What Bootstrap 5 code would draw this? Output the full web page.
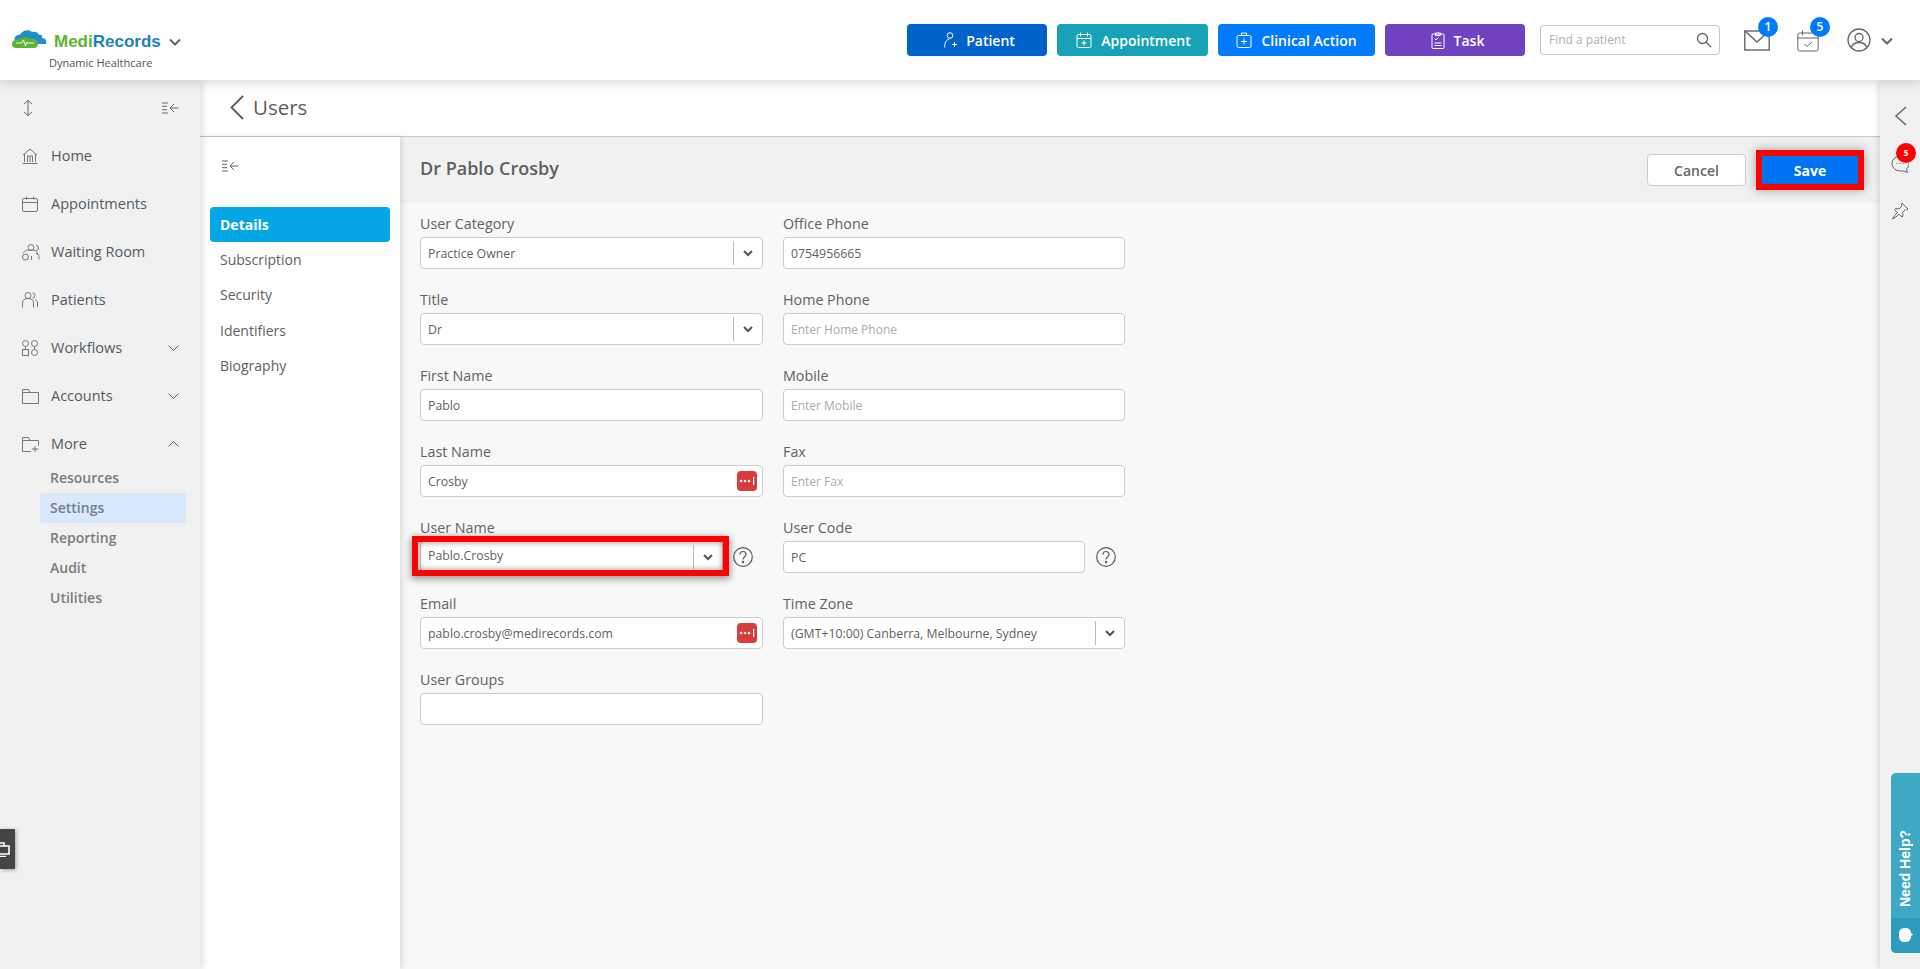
<!DOCTYPE html>
<html lang="en">
<head>
    <meta charset="UTF-8">
    <meta name="viewport" content="width=device-width, initial-scale=1.0">
    <title>Users</title>
    <link href="https://cdn.jsdelivr.net/npm/bootstrap@5.3.3/dist/css/bootstrap.min.css" rel="stylesheet"/>
    <style>
        html, body { height: 100%; }
        body { font-family: "Open Sans", sans-serif; color: #5c5c5c; overflow: hidden; background: #f8f8f8; }
        svg { display: block; flex: none; fill: none; stroke: currentColor; stroke-width: 1; }

        /* top bar */
        .top-bar { height: 80px; background: #fff; box-shadow: 0 2px 10px rgba(0,0,0,.16); position: relative; z-index: 5; padding: 0 0 0 11px; }
        .logo { width: 175px; padding-top: 20px; }
        .logo-mark { margin-top: -6px; }
        .logo-name { font: bold 17px "Liberation Sans", sans-serif; line-height: 22px; margin-left: 7px; }
        .logo-name b:first-child { color: #5cb531; }
        .logo-name b:last-child { color: #2280c0; }
        .logo-sub { font-size: 11px; line-height: 14px; color: #555; margin: 3px 0 0 38px; }
        .act { height: 32px; border: 0; border-radius: 4px; color: #fff; font-size: 14px; font-weight: 600; display: flex; align-items: center; justify-content: center; gap: 9px; padding: 0; }
        .act + .act { margin-left: 10px; }
        .act-patient { width: 140px; background: #0063cc; padding-left: 5px; }
        .act-appt { width: 151px; background: #17a2b8; padding-left: 2px; }
        .act-clinical { width: 157px; background: #007bff; }
        .act-task { width: 140px; background: #6f42c1; padding-left: 5px; }
        .find { width: 180px; height: 30px; margin-left: 15px; border: 1px solid #c6c6c6; border-radius: 4px; padding: 0 7px 0 8px; color: #b0b0b0; font-size: 12px; }
        .top-icon { width: 40px; height: 40px; color: #666; position: relative; }
        .num { position: absolute; width: 20px; height: 20px; border-radius: 50%; background: #007bff; color: #fff; font-size: 12px; font-weight: 600; line-height: 20px; text-align: center; }

        /* left menu */
        .side { width: 200px; background: #f1f1f1; box-shadow: 2px 0 8px rgba(0,0,0,.14); position: relative; z-index: 4; }
        .side-top { height: 52px; padding: 4px 21px 0 23px; color: #666; }
        .side-item { height: 48px; padding: 0 21px 0 22px; font-size: 14.5px; font-weight: 500; color: #535a63; gap: 9px; }
        .side-item .ico { width: 20px; color: #777; }
        .side-subs { margin-top: -5px; }
        .side-sub { height: 30px; margin-left: 40px; width: 146px; padding-left: 10px; border-radius: 4px; font-size: 14px; font-weight: 600; color: #7b7b7b; line-height: 30px; }
        .side-sub.active { background: #d8e9fc; color: #6f7f8e; }

        /* page */
        .page-head { height: 57px; background: #fff; border-bottom: 1px solid #c8c8c8; padding: 0 0 2px 30px; gap: 9px; font-size: 20.5px; font-weight: 500; color: #5c5c5c; }
        .sec-nav { width: 200px; background: #fff; box-shadow: 2px 0 6px rgba(0,0,0,.12); position: relative; z-index: 2; padding: 0 10px; }
        .sec-toggle { height: 70px; padding: 0 0 12px 12px; color: #666; }
        .sec-link { height: 35.2px; padding-left: 10px; font-size: 14px; font-weight: 500; color: #606060; line-height: 35px; border-radius: 4px; }
        .sec-link.active { background: #05a6e6; color: #fff; font-weight: 700; }
        .title-bar { height: 66px; background: #f1f1f1; padding: 0 16px 0 20px; }
        .title-bar h1 { font-size: 18px; font-weight: 600; color: #5f5f5f; margin: 0 0 2px; }
        .btn-cancel { width: 99px; height: 32px; background: #fff; border: 1px solid #ccc; border-radius: 4px; color: #666; font-size: 14px; font-weight: 600; padding: 0; }
        .btn-save { width: 96px; height: 28px; margin: 0 6px 0 16px; background: #0073f5; border: 0; border-radius: 0; color: #fff; font-size: 14px; font-weight: 700; padding: 0; outline: 6px solid #f00; box-shadow: 0 0 10px 6px rgba(0,0,0,.35); }

        /* form */
        .form-area { display: grid; grid-template-columns: 343px 342px; column-gap: 20px; row-gap: 0; padding: 10px 0 0 20px; align-content: start; }
        .field { height: 76px; position: relative; }
        .field label { display: block; height: 24px; font-size: 14.3px; font-weight: 500; line-height: 22px; color: #626262; margin: 0; }
        .field .form-control { height: 32px; border: 1px solid #ccc; border-radius: 4px; font-size: 12.3px; font-weight: 500; color: #5f5f5f; padding: 0 7px; box-shadow: none; }
        .field .form-control::placeholder { color: #aaa; font-size: 12px; }
        .pick { height: 32px; background: #fff; border: 1px solid #ccc; border-radius: 4px; }
        .pick .form-control { border: 0; background: transparent; height: 30px; }
        .pick .arrow { width: 29px; height: 24px; border-left: 1px solid #bbb; color: #555; flex: none; }
        .fill-icon { position: absolute; right: 6px; top: 30px; width: 20px; height: 20px; background: #d93c3c; border-radius: 4px; color: #fff; }
        .help { color: #5a5a5a; width: 20px; height: 20px; stroke-width: 1.2; }
        .mark-box { position: absolute; left: -8px; top: 19px; width: 317px; height: 40px; border: 6px solid #f00; box-shadow: 0 2px 7px 1px rgba(0,0,0,.4), inset 0 0 6px rgba(0,0,0,.45); pointer-events: none; }
        .field .marked-input { padding-bottom: 3px; }

        /* right rail */
        .rail { width: 40px; background: #f1f1f1; box-shadow: -2px 0 6px rgba(0,0,0,.12); position: relative; z-index: 3; color: #666; padding-top: 26px; gap: 27px; }
        .rail .red-num { position: absolute; left: 5px; top: -12px; width: 20px; height: 20px; border-radius: 50%; background: #f00; color: #fff; font-size: 8px; font-weight: 700; line-height: 20px; text-align: center; }
        .need-help { position: absolute; right: 0; top: 693px; width: 29px; height: 180px; border-radius: 5px 0 0 5px; overflow: hidden; background: #3fa9c5; color: #fff; }
        .need-help span { display: block; height: 145px; writing-mode: vertical-rl; transform: rotate(180deg); font: bold 14px/29px "Liberation Sans", sans-serif; white-space: nowrap; padding-top: 11px; }
        .need-help i { display: flex; height: 35px; background: #2d9cbc; align-items: center; justify-content: center; }
        .print-tab { position: absolute; left: 0; top: 829px; width: 15px; height: 40px; background: #454545; box-shadow: 1px 1px 4px rgba(0,0,0,.35); color: #fff; z-index: 6; overflow: hidden; }
        .print-tab svg { margin: 13px 0 0 -8px; stroke-width: 1.6; }
    </style>
</head>
<body class="d-flex flex-column">

    <header class="top-bar d-flex align-items-center">
        <div class="logo">
            <div class="d-flex align-items-center">
                <svg class="logo-mark" width="36" height="20" viewBox="0 0 36 20" style="stroke:none">
                    <path fill="#1f8fc9" d="M5 14C1 9 6 5 9 6c2-5 9-6 12-3 3-1 6 0 7 3 2-1 4 1 3 3 4 0 5 3 4 6H6z"/>
                    <path fill="#5cb531" d="M1 15c0-3 3-5 6-4 2-3 9-4 12-1 4-1 8 1 8 4 0 4-2 5-4 5H6c-3 0-5-1-5-4z"/>
                    <path stroke="#fff" stroke-width=".9" fill="none" d="M5 14h6l1.500-3 2 6 1.500-4 1 1h6"/>
                </svg>
                <div class="logo-name"><b>Medi</b><b>Records</b></div>
                <svg class="ms-2" width="12" height="8" viewBox="0 0 12 8" style="color:#666;stroke-width:2"><path d="M1 1.500l5 5 5-5"/></svg>
            </div>
            <div class="logo-sub">Dynamic Healthcare</div>
        </div>

        <div class="d-flex align-items-center ms-auto">
            <button class="act act-patient">
                <svg width="13" height="16" viewBox="0 0 13 16"><circle cx="6" cy="3.500" r="2.800"/><path d="M.7 15.500c0-5 1.600-7.500 4.300-8.300M8 12.500h5M10.500 10v5"/></svg>Patient
            </button>
            <button class="act act-appt">
                <svg width="16" height="16" viewBox="0 0 16 16"><rect x="1" y="2.500" width="14" height="13" rx="1.500"/><path d="M1 6.500h14M4.500.5v4M11.500.5v4M8 8.500v5M5.500 11h5"/></svg>Appointment
            </button>
            <button class="act act-clinical">
                <svg width="16" height="16" viewBox="0 0 16 16"><rect x="1" y="3.500" width="14" height="12" rx="1.500"/><path d="M5.500 3.500V1h5v2.500M8 6.500v6M5 9.500h6"/></svg>Clinical Action
            </button>
            <button class="act act-task">
                <svg width="14" height="17" viewBox="0 0 14 17"><rect x="1" y="2" width="12" height="14.500" rx="1"/><path d="M4.500 1h5v2.500h-5zM3.500 6.500l1.500 1.500 2.500-2.500M3.500 11h7M3.500 13.500h7"/></svg>Task
            </button>
        </div>

        <div class="find d-flex align-items-center justify-content-between">
            <span>Find a patient</span>
            <svg width="16" height="16" viewBox="0 0 16 16" style="color:#666;stroke-width:1.300"><circle cx="6.500" cy="6.500" r="5"/><path d="M10.200 10.200l5 5"/></svg>
        </div>

        <div class="top-icon" style="margin-left:19px">
            <svg class="position-absolute" style="left:5px;top:10px" width="26" height="21" viewBox="0 0 26 21"><rect x=".8" y="1" width="24.400" height="19" stroke-width="1.400"/><path d="M1 1l12 11L25 1" stroke-width="1.400"/></svg>
            <span class="num" style="left:19px;top:-3px">1</span>
        </div>
        <div class="top-icon" style="margin-left:14px">
            <svg class="position-absolute" style="left:4px;top:10px" width="22" height="22" viewBox="0 0 22 22"><rect x=".8" y="3" width="20.400" height="18" rx="2"/><path d="M.8 8h20.400M5.500.5v5M7.500 14l2.500 2.500 5-4.500"/></svg>
            <span class="num" style="left:17px;top:-3px">5</span>
        </div>
        <div class="d-flex align-items-center" style="margin-left:14px;color:#666">
            <svg width="24" height="24" viewBox="0 0 24 24"><circle cx="12" cy="12" r="11" stroke-width="1.300"/><circle cx="12" cy="9.500" r="4" stroke-width="1.300"/><path d="M4.500 19.500c1-4 4-5 7.500-5s6.500 1 7.500 5" stroke-width="1.300"/></svg>
            <svg style="margin:2px 0 0 10px;stroke-width:2" width="12" height="8" viewBox="0 0 12 8"><path d="M1 1.500l5 5 5-5"/></svg>
        </div>
        <div style="width:27px"></div>
    </header>

    <div class="d-flex flex-grow-1" style="min-height:0">
        <nav class="side flex-none">
            <div class="side-top d-flex align-items-center justify-content-between">
                <svg width="10" height="16" viewBox="0 0 10 16"><path d="M5 .5v15M1 4l4-3.500L9 4M1 12l4 3.500L9 12"/></svg>
                <svg width="17" height="12" viewBox="0 0 17 12"><path d="M0 1h6M0 4.300h5M0 7.700h5M0 11h6M16.500 6H8M12 2L8 6l4 4"/></svg>
            </div>
            <div class="side-item d-flex align-items-center"><span class="ico"><svg width="16" height="16" viewBox="0 0 16 16"><path d="M1 7l7-6 7 6M2.500 6v8M13.500 6v8M.5 15.500h15M5.500 14V8h5v6M8 8v6"/></svg></span>Home</div>
            <div class="side-item d-flex align-items-center"><span class="ico"><svg width="16" height="16" viewBox="0 0 16 16"><rect x=".5" y="2.500" width="15" height="13" rx="1.500"/><path d="M.5 6.500h15M4.500.5v3M11.500.5v3"/></svg></span>Appointments</div>
            <div class="side-item d-flex align-items-center"><span class="ico"><svg width="18" height="17" viewBox="0 0 18 17"><circle cx="9" cy="3.500" r="3"/><circle cx="3.500" cy="13" r="3"/><path d="M1 9.500c1-2.500 3-3.500 8-3.500 5 0 6.500 2 6.500 5M9.500 16v-4M14 9.500c2 0 3 1 3 3v3M14 1.500a2.500 2.500 0 0 1 0 5"/></svg></span>Waiting Room</div>
            <div class="side-item d-flex align-items-center"><span class="ico"><svg width="16" height="16" viewBox="0 0 16 16"><circle cx="6" cy="3.500" r="3"/><path d="M.5 15.500V11c0-3 2-4.500 5.500-4.500s5.500 1.500 5.500 4.500v4.500M10.500 1a2.500 2.500 0 0 1 0 5M13 7.500c1.500.5 2.500 1.800 2.500 3.500v4"/></svg></span>Patients</div>
            <div class="side-item d-flex align-items-center"><span class="ico"><svg width="16" height="16" viewBox="0 0 16 16"><circle cx="3.500" cy="3.500" r="3"/><circle cx="12.500" cy="3.500" r="3"/><rect x=".5" y="9.500" width="6" height="6"/><circle cx="12.500" cy="12.500" r="3"/><path d="M3.500 6.500v3M12.500 6.500v3"/></svg></span>Workflows<svg class="ms-auto" width="11" height="6" viewBox="0 0 11 6"><path d="M.5.500l5 5 5-5"/></svg></div>
            <div class="side-item d-flex align-items-center"><span class="ico"><svg width="17" height="15" viewBox="0 0 17 15"><path d="M.5 14.500V.5h6l1.500 3h8.500v11zM.5 3.500H8"/></svg></span>Accounts<svg class="ms-auto" width="11" height="6" viewBox="0 0 11 6"><path d="M.5.500l5 5 5-5"/></svg></div>
            <div class="side-item d-flex align-items-center"><span class="ico"><svg width="17" height="15" viewBox="0 0 17 15"><path d="M9 14.500H.5V.5h6l1.500 3h8.500v5M.5 3.500H8M13 9v6M10 12h6.500"/></svg></span>More<svg class="ms-auto" width="11" height="6" viewBox="0 0 11 6"><path d="M.5 5.500l5-5 5 5"/></svg></div>
            <div class="side-subs">
                <div class="side-sub">Resources</div>
                <div class="side-sub active">Settings</div>
                <div class="side-sub">Reporting</div>
                <div class="side-sub">Audit</div>
                <div class="side-sub">Utilities</div>
            </div>
        </nav>

        <main class="flex-grow-1 d-flex flex-column" style="min-width:0">
            <div class="page-head d-flex align-items-center">
                <svg width="14" height="25" viewBox="0 0 14 25" style="stroke-width:1.800"><path d="M13 1L1.500 12.500 13 24"/></svg>
                Users
            </div>

            <div class="d-flex flex-grow-1" style="min-height:0">
                <div class="sec-nav flex-none">
                    <div class="sec-toggle d-flex align-items-center">
                        <svg width="17" height="12" viewBox="0 0 17 12"><path d="M0 1h6M0 4.300h5M0 7.700h5M0 11h6M16.500 6H8M12 2L8 6l4 4"/></svg>
                    </div>
                    <div class="sec-link active">Details</div>
                    <div class="sec-link">Subscription</div>
                    <div class="sec-link">Security</div>
                    <div class="sec-link">Identifiers</div>
                    <div class="sec-link">Biography</div>
                </div>

                <div class="flex-grow-1" style="min-width:0">
                    <div class="title-bar d-flex align-items-center justify-content-between">
                        <h1>Dr Pablo Crosby</h1>
                        <div class="d-flex align-items-center">
                            <button class="btn-cancel">Cancel</button>
                            <button class="btn-save">Save</button>
                        </div>
                    </div>

                    <form class="form-area">
                        <div class="field">
                            <label>User Category</label>
                            <div class="pick d-flex align-items-center">
                                <input class="form-control" value="Practice Owner">
                                <span class="arrow d-flex align-items-center justify-content-center"><svg width="10" height="7" viewBox="0 0 10 7" style="stroke-width:2"><path d="M1 1l4 4 4-4"/></svg></span>
                            </div>
                        </div>
                        <div class="field">
                            <label>Office Phone</label>
                            <input class="form-control" value="0754956665">
                        </div>

                        <div class="field">
                            <label>Title</label>
                            <div class="pick d-flex align-items-center">
                                <input class="form-control" value="Dr">
                                <span class="arrow d-flex align-items-center justify-content-center"><svg width="10" height="7" viewBox="0 0 10 7" style="stroke-width:2"><path d="M1 1l4 4 4-4"/></svg></span>
                            </div>
                        </div>
                        <div class="field">
                            <label>Home Phone</label>
                            <input class="form-control" placeholder="Enter Home Phone">
                        </div>

                        <div class="field">
                            <label>First Name</label>
                            <input class="form-control" value="Pablo">
                        </div>
                        <div class="field">
                            <label>Mobile</label>
                            <input class="form-control" placeholder="Enter Mobile">
                        </div>

                        <div class="field">
                            <label>Last Name</label>
                            <input class="form-control" value="Crosby">
                            <span class="fill-icon d-flex align-items-center justify-content-center"><svg width="16" height="8" viewBox="0 0 16 8" style="stroke:none;fill:#fff"><circle cx="2" cy="4" r="1.300"/><circle cx="6" cy="4" r="1.300"/><circle cx="10" cy="4" r="1.300"/><rect x="14" y="0" width="1.200" height="8"/></svg></span>
                        </div>
                        <div class="field">
                            <label>Fax</label>
                            <input class="form-control" placeholder="Enter Fax">
                        </div>

                        <div class="field">
                            <label>User Name</label>
                            <div class="d-flex align-items-center">
                                <div class="pick d-flex align-items-center" style="width:303px">
                                    <input class="form-control marked-input" value="Pablo.Crosby">
                                    <span class="arrow d-flex align-items-center justify-content-center"><svg width="10" height="7" viewBox="0 0 10 7" style="stroke-width:2"><path d="M1 1l4 4 4-4"/></svg></span>
                                </div>
                                <svg class="help" style="margin-left:10px" viewBox="0 0 20 20"><circle cx="10" cy="10" r="9.300"/><path d="M7 7.500C7 5.500 8.500 4.500 10 4.500s3 1 3 3c0 2.500-3 2.500-3 5"/><circle cx="10" cy="15" r=".6"/></svg>
                            </div>
                            <div class="mark-box"></div>
                        </div>
                        <div class="field">
                            <label>User Code</label>
                            <div class="d-flex align-items-center">
                                <input class="form-control" style="width:302px" value="PC">
                                <svg class="help" style="margin-left:11px" viewBox="0 0 20 20"><circle cx="10" cy="10" r="9.300"/><path d="M7 7.500C7 5.500 8.500 4.500 10 4.500s3 1 3 3c0 2.500-3 2.500-3 5"/><circle cx="10" cy="15" r=".6"/></svg>
                            </div>
                        </div>

                        <div class="field">
                            <label>Email</label>
                            <input class="form-control" value="pablo.crosby@medirecords.com">
                            <span class="fill-icon d-flex align-items-center justify-content-center"><svg width="16" height="8" viewBox="0 0 16 8" style="stroke:none;fill:#fff"><circle cx="2" cy="4" r="1.300"/><circle cx="6" cy="4" r="1.300"/><circle cx="10" cy="4" r="1.300"/><rect x="14" y="0" width="1.200" height="8"/></svg></span>
                        </div>
                        <div class="field">
                            <label>Time Zone</label>
                            <div class="pick d-flex align-items-center">
                                <input class="form-control" value="(GMT+10:00) Canberra, Melbourne, Sydney">
                                <span class="arrow d-flex align-items-center justify-content-center"><svg width="10" height="7" viewBox="0 0 10 7" style="stroke-width:2"><path d="M1 1l4 4 4-4"/></svg></span>
                            </div>
                        </div>

                        <div class="field">
                            <label>User Groups</label>
                            <input class="form-control">
                        </div>
                    </form>
                </div>
            </div>
        </main>

        <aside class="rail flex-none d-flex flex-column align-items-center">
            <svg width="13" height="20" viewBox="0 0 13 20" style="stroke-width:1.500"><path d="M12 1L2 10l10 9"/></svg>
            <div class="position-relative" style="margin-top:2px">
                <svg width="18" height="18" viewBox="0 0 18 18"><path d="M9 1a8 7.500 0 1 0 0 15c2 0 3 0 4 0l3.500 1.500-1-3.500A7.500 7.500 0 0 0 9 1z"/><path d="M5.500 8.500h1M8.500 8.500h1M11.500 8.500h1"/></svg>
                <span class="red-num">5</span>
            </div>
            <svg width="18" height="18" viewBox="0 0 18 18" style="margin-top:2px"><path d="M11 1l6 6-1.500 1-1-.5-3 3 .5 3.500-1 1-3-3-3 3-3.500 2 2-3.500 3-3-3-3 1-1 3.500.5 3-3-.5-1z"/></svg>
            <div class="need-help">
                <span>Need Help?</span>
                <i><svg width="15" height="15" viewBox="0 0 15 15" style="stroke:none;fill:#fff"><path d="M7 14C3 14 1 12 1 8V6c0-4 2-6 6-6s6 2 6 5l2 1.500-2 1.500c0 4-2 6-6 6z"/></svg></i>
            </div>
        </aside>
    </div>

    <div class="print-tab"><svg width="18" height="15" viewBox="0 0 18 15"><path d="M4 4V1h8v3M1 4h16v8H1zM4 14.500h10"/></svg></div>

    <script src="https://cdn.jsdelivr.net/npm/bootstrap@5.3.3/dist/js/bootstrap.bundle.min.js"></script>
</body>
</html>
